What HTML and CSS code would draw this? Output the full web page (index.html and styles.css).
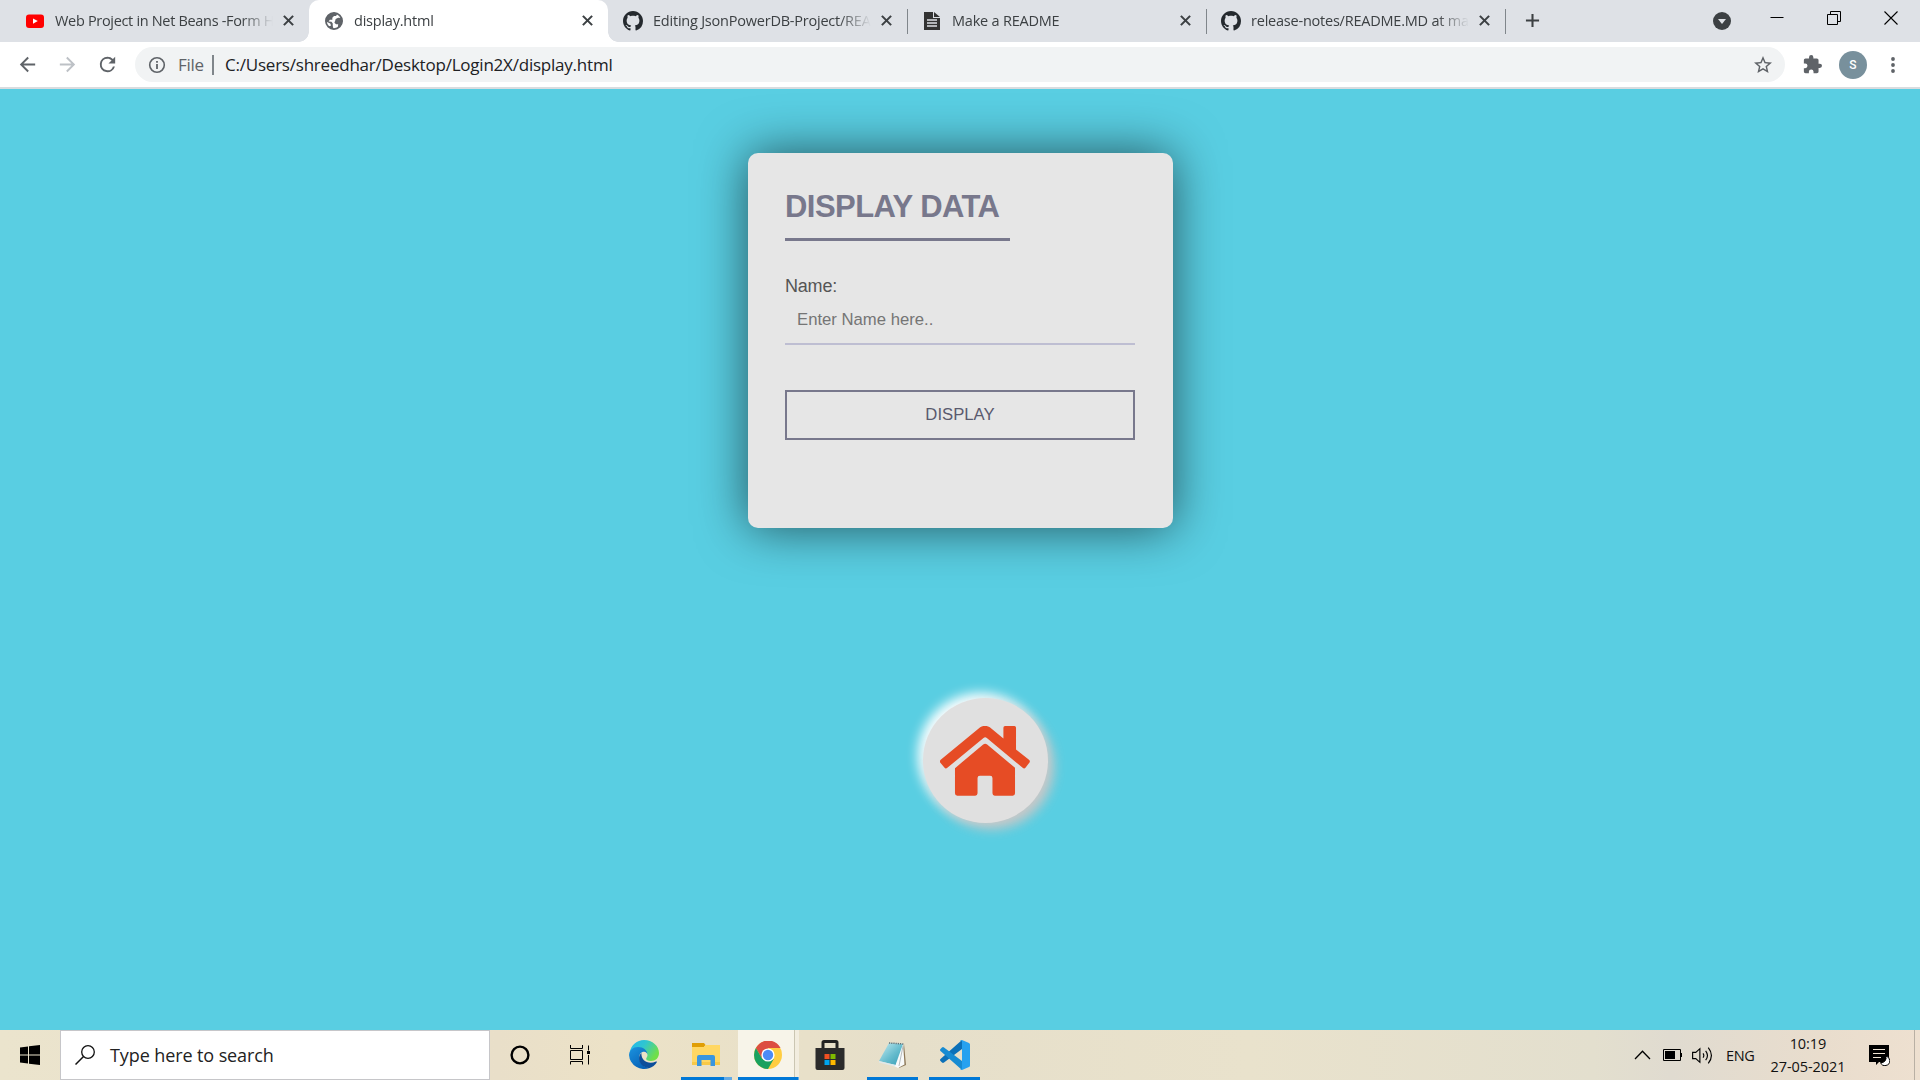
FILE: index.html
```html
<!DOCTYPE html>
<html lang="en">
<head>
<meta charset="utf-8">
<title>display.html</title>
<link rel="stylesheet" href="styles.css">
</head>
<body>
<svg class="symbols" aria-hidden="true">
  <symbol id="close" viewBox="0 0 10 10"><path d="M.8.8l8.4 8.4M9.2.8L.8 9.2" stroke="#3c4043" stroke-width="1.9" fill="none"/></symbol>
  <symbol id="github" viewBox="0 0 16 16"><path fill="#24292e" d="M8 0C3.58 0 0 3.58 0 8c0 3.54 2.29 6.53 5.47 7.59.4.07.55-.17.55-.38 0-.19-.01-.82-.01-1.49-2.01.37-2.53-.49-2.69-.94-.09-.23-.48-.94-.82-1.13-.28-.15-.68-.52-.01-.53.63-.01 1.08.58 1.23.82.72 1.21 1.87.87 2.33.66.07-.52.28-.87.51-1.07-1.78-.2-3.64-.89-3.64-3.95 0-.87.31-1.59.82-2.15-.08-.2-.36-1.02.08-2.12 0 0 .67-.21 2.2.82.64-.18 1.32-.27 2-.27s1.36.09 2 .27c1.53-1.04 2.2-.82 2.2-.82.44 1.1.16 1.92.08 2.12.51.56.82 1.27.82 2.15 0 3.07-1.87 3.75-3.65 3.95.29.25.54.73.54 1.48 0 1.07-.01 1.93-.01 2.2 0 .21.15.46.55.38A8.01 8.01 0 0 0 16 8c0-4.42-3.58-8-8-8z"/></symbol>
</svg>

<header class="tabstrip">
  <div class="tab first">
    <svg class="fav" viewBox="0 0 20 20"><rect x="1" y="3.500" width="18" height="13.500" rx="3" fill="#f00"/><path d="M8 7.400v5.400l4.800-2.700z" fill="#fff"/></svg>
    <span class="label">Web Project in Net Beans -Form Handling</span>
    <svg class="x"><use href="#close"/></svg>
  </div>
  <div class="tab active">
    <svg class="fav" viewBox="0 0 24 24"><circle cx="12" cy="12" r="9.700" fill="#fff" stroke="#5f6368" stroke-width="2.200"/><path fill="#5f6368" d="M2.200 10.500C3 5.500 7 2 12 2c1.500 0 3 .3 4.200.9L14.500 6H12l-2 2v2.500H7L5.500 12.500 9 13l1.500 2v3l1 3.800A10 10 0 0 1 5 19l3.500-1.500L7.500 15 2.500 12.500zM14 9.500l3-1.500 4 .5 1 3.500c0 4-2.500 7-5.500 8.800L17 16h-2.500L12.500 14l1-2.500z"/></svg>
    <span class="label">display.html</span>
    <svg class="x"><use href="#close"/></svg>
  </div>
  <div class="tab">
    <svg class="fav"><use href="#github"/></svg>
    <span class="label">Editing JsonPowerDB-Project/README.md</span>
    <svg class="x"><use href="#close"/></svg>
  </div>
  <div class="tab ruled">
    <svg class="fav" viewBox="0 0 20 20"><path fill="#333" d="M2 1h9v6h7v12H2zM12 1l6 5h-6z"/><path stroke="#dee1e6" stroke-width="1.300" d="M5 9h10M5 12h10M5 15h10"/></svg>
    <span class="label">Make a README</span>
    <svg class="x"><use href="#close"/></svg>
  </div>
  <div class="tab ruled">
    <svg class="fav"><use href="#github"/></svg>
    <span class="label">release-notes/README.MD at master</span>
    <svg class="x"><use href="#close"/></svg>
  </div>
  <div class="newtab"><svg viewBox="0 0 16 16"><path d="M8 1v14M1 8h14" stroke="#3c4043" stroke-width="2.200"/></svg></div>
  <div class="window">
    <svg class="search-tabs" viewBox="0 0 18 18"><circle cx="9" cy="9" r="9" fill="#3c4043"/><path d="M5 7h8l-4 5z" fill="#dee1e6"/></svg>
    <svg class="win" viewBox="0 0 14 14"><path d="M.5 6.500h13" stroke="#000"/></svg>
    <svg class="win" viewBox="0 0 14 14"><path d="M.5 3.500h10v10H.5zM3.500 3V.5h10v10H11" fill="none" stroke="#000"/></svg>
    <svg class="win" viewBox="0 0 14 14"><path d="M.5.5l13 13M13.500.5L.5 13.500" stroke="#000" stroke-width="1.100"/></svg>
  </div>
</header>

<nav class="toolbar">
  <svg class="nav" viewBox="0 0 24 24"><path fill="#5f6368" d="M20 11H7.830l5.590-5.590L12 4l-8 8 8 8 1.410-1.410L7.830 13H20z"/></svg>
  <svg class="nav" viewBox="0 0 24 24"><path fill="#bdc1c6" d="M4 11h12.170l-5.590-5.590L12 4l8 8-8 8-1.410-1.410L16.170 13H4z"/></svg>
  <svg class="nav" viewBox="0 0 24 24"><path fill="#5f6368" d="M17.650 6.350A7.960 7.960 0 0 0 12 4a8 8 0 1 0 7.730 10h-2.080A6 6 0 1 1 12 6c1.660 0 3.140.69 4.220 1.780L13 11h7V4z"/></svg>
  <div class="omnibox">
    <svg class="info" viewBox="0 0 18 18"><circle cx="9" cy="9" r="7.300" fill="none" stroke="#5f6368" stroke-width="1.600"/><path d="M9 8v5M9 5v1.800" stroke="#5f6368" stroke-width="1.800"/></svg>
    <span class="scheme">File</span>
    <span class="url">C:/Users/shreedhar/Desktop/Login2X/display.html</span>
    <svg class="star" viewBox="2 2 20 20"><path fill="#5f6368" d="M22 9.240l-7.190-.62L12 2 9.190 8.630 2 9.240l5.460 4.730L5.820 21 12 17.270 18.180 21l-1.630-7.030zM12 15.400l-3.760 2.270 1-4.280-3.320-2.880 4.380-.38L12 6.100l1.710 4.040 4.380.38-3.320 2.880 1 4.280z"/></svg>
  </div>
  <svg class="puzzle" viewBox="1 1 22 22"><path fill="#5f6368" d="M20.500 11H19V7c0-1.100-.9-2-2-2h-4V3.500a2.500 2.500 0 0 0-5 0V5H4c-1.100 0-2 .9-2 2v3.800h1.500a2.700 2.700 0 0 1 0 5.400H2V20c0 1.100.9 2 2 2h3.800v-1.500a2.700 2.700 0 0 1 5.400 0V22H17c1.100 0 2-.9 2-2v-4h1.500a2.500 2.500 0 0 0 0-5z"/></svg>
  <span class="avatar">S</span>
  <svg class="dots" viewBox="0 0 6 18"><path d="M3 3h0M3 9h0M3 15h0" stroke="#5f6368" stroke-width="3.800" stroke-linecap="round"/></svg>
</nav>

<main class="page">
  <form class="card">
    <h1>DISPLAY DATA</h1>
    <label for="name">Name:</label>
    <input id="name" type="text" placeholder="Enter Name here..">
    <button type="button">DISPLAY</button>
  </form>
  <a class="home">
    <svg viewBox="150 168 271 211"><path fill="#e64c25" d="M195 295L280 224q6-5 12 0L376 294V371q0 7-7 7H315q-7 0-7-7V325q0-7-7-7H270q-7 0-7 7V371q0 7-7 7H202q-7 0-7-7zM152 270L271 172q14-9 29 0L341 206V173q0-5 5-5H374q5 0 5 5V239L418 270q5 4 1 9L408 293q-4 5-9 1L291 204q-5-4-10 0L172 294q-5 4-9-1L151 279q-3-5 1-9z"/></svg>
  </a>
</main>

<footer class="taskbar">
  <div class="start"><svg viewBox="0 0 20 20"><path d="M0 2.600L8 1.500V9.400H0zM9 1.300L20 0V9.400H9zM0 10.400H8V18.500L0 17.400zM9 10.400H20V20L9 18.700z"/></svg></div>
  <div class="search">
    <svg viewBox="0 0 20 20"><circle cx="13" cy="7" r="6.300" fill="none" stroke="#111" stroke-width="1.300"/><path d="M8.500 11.500L.5 19.500" stroke="#111" stroke-width="1.500"/></svg>
    <span>Type here to search</span>
  </div>
  <div class="apps">
    <div class="app"><svg class="i20" viewBox="0 0 20 20"><circle cx="10" cy="10" r="8.400" fill="none" stroke="#000" stroke-width="2.400"/></svg></div>
    <div class="app view"><svg class="i20" viewBox="0 0 20 20"><path d="M.5 0v3.500h12V0M.5 5.500h12v9H.5zM.5 19.500V16.500h12v3M18.500.5v5M18.500 10v9.500" fill="none" stroke="#000"/><path d="M17 6h3v3h-3z"/></svg></div>
    <div class="app edge"><svg class="i30" viewBox="0 0 30 30">
      <defs>
        <linearGradient id="e1" x1="0" y1="0" x2="1" y2=".5"><stop offset="0" stop-color="#20b5f2"/><stop offset=".5" stop-color="#30c6cf"/><stop offset="1" stop-color="#70df48"/></linearGradient>
        <linearGradient id="e2" x1="0" y1="0" x2=".7" y2="1"><stop offset="0" stop-color="#1c93df"/><stop offset="1" stop-color="#0560b5"/></linearGradient>
      </defs>
      <path fill="url(#e1)" d="M.5 13C2 5 8 0 15 0c8.500 0 15 6 15 13 0 5-3.500 8-8 8-3.500 0-5.200-1.400-4.800-2.600.4-1 1.300-1.700 1.300-3.400C18.500 9.500 6 6 .5 13z"/>
      <path fill="url(#e2)" d="M0 15C.5 10 4 7 9 7c5.500 0 9.500 3.500 9.500 8 0-2-1.600-3.300-3.300-3.300-5 0-6.200 6-3.700 10.300 2 3.500 6 6 9.500 5.800A15 15 0 0 1 0 15z"/>
      <path fill="#0c4e9a" d="M12.400 13c-5 4-2 14 7.600 15.200 3.500-1 6.200-3.200 7.800-6 .4-.7-.2-1-.8-.7C20 24.800 12 21.500 12.400 13z"/>
    </svg></div>
    <div class="app open folder"><svg class="i28" viewBox="0 0 28 24"><path fill="#e09e05" d="M0 1h12l1.500 2L12 5H0z"/><path fill="#ffd763" d="M0 5h12l1.500-2H28v20H0z"/><path fill="#f8c948" d="M0 20h28v3H0z"/><path fill="#3a96df" d="M5 24V15q0-2 2-2H21q2 0 2 2v9h-4.500v-6h-9v6z"/></svg></div>
    <div class="app open chrome"><svg class="i28" viewBox="0 0 28 28"><circle cx="14" cy="14" r="14" fill="#ffcd41"/><path fill="#dc4e41" d="M14 14V7h12.600A14 14 0 0 0 1.900 7L8 17.500z"/><path fill="#19a15f" d="M1.900 7A14 14 0 0 0 14 28l6-10.500L14 20l-6-2.500z"/><circle cx="14" cy="14" r="6.600" fill="#fff"/><circle cx="14" cy="14" r="5.200" fill="#4c8bf5"/></svg></div>
    <div class="app store"><svg class="i30" viewBox="0 0 30 30"><path d="M8 9V2.500Q8 1.500 9 1.500H21q1 0 1 1V9" fill="none" stroke="#222" stroke-width="3"/><path fill="#2b2b2b" d="M.5 8h29V28q0 2-2 2h-25q-2 0-2-2z"/><path fill="#f25022" d="M9.500 14h5v5h-5z"/><path fill="#7fba00" d="M15.500 14h5v5h-5z"/><path fill="#00a4ef" d="M9.500 20h5v5h-5z"/><path fill="#ffb900" d="M15.500 20h5v5h-5z"/></svg></div>
    <div class="app open note"><svg class="i30" viewBox="0 0 30 30">
      <defs><linearGradient id="n1" x1="0" y1="0" x2="1" y2="1"><stop offset="0" stop-color="#c9edf2"/><stop offset=".55" stop-color="#68bdce"/><stop offset="1" stop-color="#329cb5"/></linearGradient></defs>
      <path fill="#8c7858" d="M26 4l2 21-7 3z"/><path fill="#f8fafa" d="M25 3l1.500 21.500L20 28l-6-3z"/><path stroke="#b6bdc0" d="M25 6l-4 20"/><path fill="url(#n1)" d="M11 3l14 1-7.500 21L1 21z"/><path fill="#dfe9eb" d="M1 21l16.500 4-.5 1.500L1 22.500z"/><path stroke="#63737a" stroke-width="1.500" stroke-dasharray="1.200 1" d="M11 3l15 1"/></svg></div>
    <div class="app open code"><svg class="i30" viewBox="0 0 30 30"><path fill="#0b70b8" d="M22 0v9L4 22.500q-1 .8-2 0L.5 21q-1-1 0-2z"/><path fill="#168bd2" d="M22 30v-9L4 7.500q-1-.8-2 0L.5 9q-1 1 0 2z"/><path fill="#27a1ef" d="M22 0l7 3q1 .5 1 1.600V25.400q0 1.100-1 1.600l-7 3q-1.200.2-2-1 2 .8 2-1V2q0-1.800-2-1 .8-1.200 2-1z"/></svg></div>
  </div>
  <div class="tray">
    <svg class="chev" viewBox="0 0 16 10"><path d="M.5 9L8 1.200 15.500 9" fill="none" stroke="#000" stroke-width="1.300"/></svg>
    <svg class="battery" viewBox="0 0 19 12"><path d="M.5.5h17v11H.5zM18.500 4v4" fill="none" stroke="#000"/><path d="M2 2h10v8H2z"/></svg>
    <svg class="sound" viewBox="0 0 20 18"><path d="M.6 6h3L7.500 2.500v13L3.600 12h-3zM10.500 7q1.500 2 0 4M13 4.500q3.500 4.500 0 9M15.500 1.500q6 7.500 0 15" fill="none" stroke="#000" stroke-width="1.100"/></svg>
    <span class="lang">ENG</span>
    <div class="clock"><span>10:19</span><span>27-05-2021</span></div>
    <svg class="notify" viewBox="0 0 21 21"><path d="M0 0h20v17H10l-3 3v-3H0z"/><path d="M4 4.500h12M4 8.500h12M4 12.500h8" stroke="#efe4d4" stroke-width="1.200"/><path d="M16.500 11a4.500 4.500 0 0 1-5 6.500 4.800 4.800 0 1 0 5-6.500z" fill="#fff" stroke="#000"/></svg>
  </div>
</footer>
</body>
</html>
```
FILE: styles.css
```css
* { box-sizing: border-box; }
body {
  margin: 0;
  width: 1920px;
  height: 1080px;
  overflow: hidden;
  display: flex;
  flex-direction: column;
  font-family: "Open Sans", "Noto Sans", sans-serif;
  color: #3c4043;
}
svg { display: block; flex: none; }
.symbols { position: absolute; width: 0; height: 0; }

/* tab strip */
.tabstrip { height: 42px; flex: none; display: flex; background: #dee1e6; }
.tab { width: 299px; display: flex; align-items: center; padding: 0 15px 1px; position: relative; }
.tab.first { width: 309px; padding-left: 25px; }
.active { background: #fff; border-radius: 10px 10px 0 0; }
.active::before, .active::after {
  content: "";
  position: absolute;
  bottom: 0;
  width: 10px;
  height: 10px;
}
.active::before { left: -10px; background: radial-gradient(circle at 0 0, #dee1e6 9.500px, #fff 10px); }
.active::after { right: -10px; background: radial-gradient(circle at 100% 0, #dee1e6 9.500px, #fff 10px); }
.ruled::before, .newtab::before {
  content: "";
  position: absolute;
  left: 0;
  top: 9px;
  width: 1px;
  height: 25px;
  background: #80868b;
}
.fav { width: 20px; height: 20px; margin-right: 10px; }
.label {
  flex: 1;
  overflow: hidden;
  white-space: nowrap;
  font-size: 14.500px;
  letter-spacing: -.22px;
  -webkit-mask-image: linear-gradient(90deg, #000 calc(100% - 32px), transparent);
  mask-image: linear-gradient(90deg, #000 calc(100% - 32px), transparent);
}
.first .label { letter-spacing: -.32px; }
.x { width: 11px; height: 11px; margin-left: 10px; }
.newtab { position: relative; width: 60px; padding: 13px 0 0 20px; }
.newtab svg { width: 15px; height: 15px; }
.window { margin-left: auto; display: flex; padding: 11px 22px 0 0; }
.search-tabs { width: 18px; height: 18px; margin: 1px 39px 0 0; }
.win { width: 14px; height: 14px; }
.win + .win { margin-left: 43px; }

/* toolbar */
.toolbar {
  height: 47px;
  flex: none;
  display: flex;
  align-items: center;
  background: #fff;
  border-bottom: 2px solid #d9dcdf;
  padding: 0 19px 0 16px;
}
.nav { width: 23px; height: 23px; margin-right: 17px; }
.nav:nth-child(3) { margin-right: 16px; }
.omnibox {
  width: 1650px;
  height: 35px;
  border-radius: 18px;
  background: #f1f3f4;
  display: flex;
  align-items: center;
  padding: 0 13px;
  font-size: 17px;
}
.info { width: 18px; height: 18px; }
.scheme { margin-left: 12px; width: 36px; border-right: 2px solid #80868b; line-height: 20px; color: #5f6368; font-size: 17px; letter-spacing: -.3px; }
.url { margin-left: 11px; color: #202124; letter-spacing: -.22px; white-space: nowrap; }
.star { width: 18px; height: 18px; margin-left: auto; }
.puzzle { width: 19px; height: 19px; margin-left: 18px; }
.avatar {
  width: 28px;
  height: 28px;
  margin-left: 17px;
  border-radius: 50%;
  background: #78909c;
  color: #fff;
  font: 500 12px/28px Roboto, sans-serif;
  text-align: center;
}
.dots { width: 6px; height: 18px; margin-left: 23px; }

/* page content */
.page {
  height: 941px;
  flex: none;
  background: #59cee2;
  padding-top: 64px;
  font-family: "Liberation Sans", sans-serif;
}
.card {
  width: 425px;
  height: 375px;
  margin: 0 auto 0 748px;
  padding: 37px;
  border-radius: 10px;
  background: #e6e6e6;
  box-shadow: 0 0 50px rgba(0, 0, 0, .6);
}
h1 {
  width: 225px;
  height: 51px;
  margin: 0;
  border-bottom: 3px solid #78788c;
  color: #78788c;
  font-size: 31px;
  line-height: 34px;
  letter-spacing: -.55px;
  white-space: nowrap;
}
label { display: block; margin-top: 34px; font-size: 18px; line-height: 22px; letter-spacing: -.2px; color: #555; }
input {
  display: block;
  width: 350px;
  height: 48px;
  margin: 0;
  padding: 0 12px;
  border: 0;
  border-bottom: 2px solid #bebed2;
  background: none;
  font: 16.700px "Liberation Sans", sans-serif;
}
input::placeholder { color: #757575; }
button {
  display: block;
  width: 350px;
  height: 50px;
  margin: 45px 0 0;
  padding: 0;
  border: 2px solid #78788c;
  background: none;
  color: #5a5a6e;
  font: 16.700px "Liberation Sans", sans-serif;
}
.home {
  width: 125px;
  height: 125px;
  margin: 170px 0 0 923px;
  padding-right: 2px;
  border-radius: 50%;
  background: #e0e0e0;
  box-shadow: 6px 6px 12px #c8c8c8, -5px -5px 12px #fff;
  display: flex;
  align-items: center;
  justify-content: center;
}
.home svg { width: 90px; height: 70px; }

/* taskbar */
.taskbar {
  height: 50px;
  flex: none;
  display: flex;
  color: #111;
  background: linear-gradient(90deg, #ebe4cd 0, #e9dfc9 26%, #ece2c7 32%, #e6dfca 47%, #e9e2cc 65%, #e3dfce 83%, #e0dbd0 87%, #e9ddcd 95%, #eee0d0 100%);
}
.start { width: 60px; padding: 15px 20px; }
.start svg, .search svg, .i20 { width: 20px; height: 20px; }
.search {
  width: 430px;
  border: 1px solid #c6c6c9;
  background: #fff;
  display: flex;
  align-items: center;
  padding: 0 0 0 14px;
  font-size: 18px;
}
.search span { margin-left: 15px; letter-spacing: -.1px; color: #222; }
.apps { display: flex; padding-left: 5px; }
.app { width: 50px; display: flex; align-items: center; justify-content: center; position: relative; }
.app.view { width: 70px; }
.app.edge { width: 66px; padding-right: 8px; }
.i30 { width: 30px; height: 30px; }
.i28 { width: 28px; height: 28px; }
.open { width: 51px; margin-right: 11px; border-bottom: 3px solid #0078d7; padding-top: 3px; }
.open.folder { width: 51px; margin: 0 6px 0 0; padding: 0 2px 0 0; border-image: linear-gradient(90deg, #0078d7 80%, #62aae6 80%) 3; }
.open.chrome { width: 61px; margin: 0; padding-right: 2px; background: linear-gradient(90deg, #f7f4e9 56px, #cbc6b2 56px 57px, #f2eddf 57px); border-image: linear-gradient(90deg, #0078d7 93%, #62aae6 93%) 3; }
.app.store { width: 61px; margin-right: 7px; }
.tray { margin-left: auto; display: flex; align-items: center; padding-right: 5px; }
.chev { width: 17px; height: 10px; }
.battery { width: 19px; height: 12px; margin-left: 12px; }
.sound { width: 21px; height: 19px; margin-left: 10px; }
.lang { margin-left: 13px; width: 29px; font-size: 14.500px; letter-spacing: -.3px; }
.clock { width: 76px; margin-left: 15px; display: flex; flex-direction: column; text-align: center; font-size: 14.500px; line-height: 23px; letter-spacing: -.05px; white-space: nowrap; }
.notify { width: 21px; height: 21px; margin: 0 24px 0 23px; }
.tray::after { content: ""; height: 50px; border-left: 1px solid #b9b0a4; }
```
